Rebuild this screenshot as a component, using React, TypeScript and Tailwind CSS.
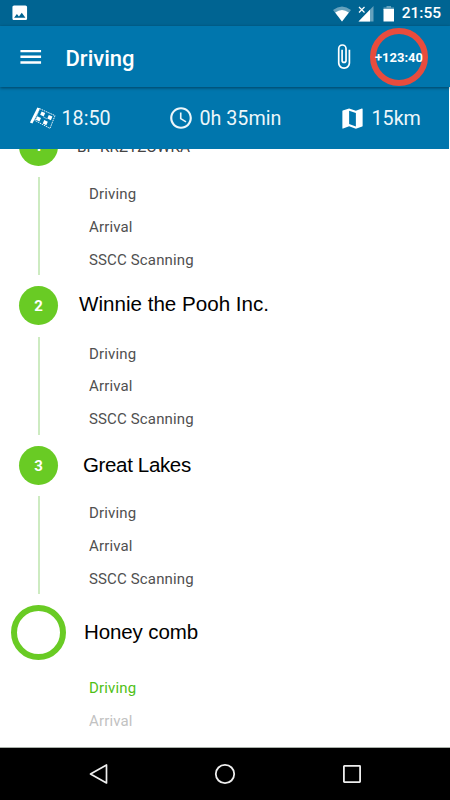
import { clsx } from 'clsx';
import { MdAttachFile, MdMap, MdMenu, MdPhoto, MdSchedule } from 'react-icons/md';

type TaskState = 'done' | 'active' | 'pending';

interface Task {
  label: string;
  state: TaskState;
}

interface Stop {
  id: number;
  name: string;
  nameClass: string;
  tasks: Task[];
}

const doneTasks: Task[] = [
  { label: 'Driving', state: 'done' },
  { label: 'Arrival', state: 'done' },
  { label: 'SSCC Scanning', state: 'done' },
];

const stops: Stop[] = [
  {
    id: 1,
    name: 'BP KRZYŻÓWKA',
    nameClass: "pl-[19px] pt-[3px] font-['Roboto',sans-serif] text-[15.3px] text-[#444]",
    tasks: doneTasks,
  },
  {
    id: 2,
    name: 'Winnie the Pooh Inc.',
    nameClass: "pl-[21px] pb-[2px] font-['Liberation_Sans',sans-serif] text-[20.6px] text-black",
    tasks: doneTasks,
  },
  {
    id: 3,
    name: 'Great Lakes',
    nameClass: "pl-[25px] pb-px font-['Liberation_Sans',sans-serif] text-[20.5px] tracking-[-0.35px] text-black",
    tasks: doneTasks,
  },
];

const current: Stop = {
  id: 4,
  name: 'Honey comb',
  nameClass: "pl-[18px] pb-px font-['Liberation_Sans',sans-serif] text-[20.5px] tracking-[-0.1px] text-black",
  tasks: [
    { label: 'Driving', state: 'active' },
    { label: 'Arrival', state: 'pending' },
  ],
};

function StatusBar() {
  return (
    <div className="flex h-[26px] shrink-0 items-center bg-[#006492] pl-[10px] pr-[9px] text-white">
      <MdPhoto size={19.5} />
      <div className="ml-auto flex items-center pt-px">
        <svg width="18" height="16" viewBox="0 0 18 16" className="mr-[7px]">
          <path d="M0 4 Q9 -3 18 4 L9 15.5 Z" fill="#fff" opacity="0.4" />
          <path d="M2.2 6.6 Q9 1.6 15.8 6.6 L9 15.5 Z" fill="#fff" />
        </svg>
        <svg width="16" height="16" viewBox="0 0 16 16" className="mr-[9px]">
          <path d="M15.5 0 V15.5 H0.5 Z" fill="#fff" opacity="0.4" />
          <path d="M12 3.7 V15.5 H0.5 Z" fill="#fff" />
          <path d="M1 1 L6.5 6.5 M6.5 1 L1 6.5" stroke="#fff" strokeWidth="1.2" />
        </svg>
        <svg width="12" height="16" viewBox="0 0 12 16" className="mr-[7px]">
          <path d="M3.5 0 H8 V1.5 H11 V4 H0.5 V1.5 H3.5 Z" fill="#fff" opacity="0.4" />
          <path d="M0.5 3 H11 V15.5 H0.5 Z" fill="#fff" />
        </svg>
        <span className="pt-px text-[15.5px] leading-none font-medium">21:55</span>
      </div>
    </div>
  );
}

function AppBar() {
  return (
    <header className="z-10 flex h-[61px] shrink-0 items-center bg-[#0076ad] pl-[17px] pr-[22px] text-white shadow-[0_1px_3px_rgba(0,0,0,0.45)]">
      <MdMenu size={27.5} />
      <h1 className="ml-[21px] pt-[4px] text-[22px] leading-none font-medium">Driving</h1>
      <MdAttachFile size={27} className="ml-auto" />
      <div className="ml-[13px] flex h-[58px] w-[58px] items-center justify-center rounded-full border-[6px] border-[#e84c3d]">
        <span className="pt-[2px] text-[13px] font-bold whitespace-nowrap">+123:40</span>
      </div>
    </header>
  );
}

function FlagIcon() {
  return (
    <svg width="27" height="23" viewBox="0 0 27 23">
      <path d="M9.6 1 L2.2 16" stroke="#fff" strokeWidth="2.8" />
      <path
        d="M10.5 1.6 L26 8.6 L21 21.4 L5.8 13.4 Z"
        fill="none"
        stroke="#fff"
        strokeWidth="0.9"
        strokeDasharray="1.6 0.8"
      />
      <g fill="#fff">
        <path d="M12.6 4.4 L16.2 6 L14.7 9.6 L11.2 7.8 Z" />
        <path d="M19.8 8 L23.4 9.6 L21.9 13.2 L18.3 11.4 Z" />
        <path d="M8.3 9.2 L12 11 L10.5 14.6 L6.8 12.8 Z" />
        <path d="M15.2 13 L18.8 14.8 L17.3 18.2 L13.8 16.4 Z" />
        <path d="M14.7 9.6 L18.3 11.4 L17.9 12.3 L14.3 10.6 Z" opacity="0.5" />
      </g>
    </svg>
  );
}

function TripSummary() {
  return (
    <div className="mr-px flex h-[62px] shrink-0 items-center bg-[#0076ad] pl-[28.5px] pt-[1px] text-[19.7px] text-[#edf6fa]">
      <div className="flex w-[139px] items-center gap-[6px]">
        <FlagIcon />
        <span className="pt-px">18:50</span>
      </div>
      <div className="flex w-[171px] items-center gap-[6px]">
        <MdSchedule size={26} />
        <span className="pt-px">0h 35min</span>
      </div>
      <div className="flex items-center gap-[6px] text-white">
        <MdMap size={27} />
        <span className="pt-px text-[#edf6fa]">15km</span>
      </div>
    </div>
  );
}

function TaskList({ tasks }: { tasks: Task[] }) {
  return (
    <ul className="text-[15px] tracking-[0.15px]">
      {tasks.map((task) => (
        <li
          key={task.label}
          className={clsx(
            'flex h-[32.8px] items-center',
            task.state === 'done' && 'text-[#505050]',
            task.state === 'active' && 'text-[#4fbf16]',
            task.state === 'pending' && 'text-[#c2c2c2]',
          )}
        >
          {task.label}
        </li>
      ))}
    </ul>
  );
}

function CompletedStop({ stop }: { stop: Stop }) {
  return (
    <li className="h-[159.6px] pl-[19px]">
      <div className="flex h-[39px] items-center">
        <span className="flex h-[39px] w-[39px] shrink-0 items-center justify-center rounded-full bg-[#69cb24] pt-px text-[15px] font-bold text-white">
          {stop.id}
        </span>
        <span className={stop.nameClass}>{stop.name}</span>
      </div>
      <div className="flex pt-[11.5px]">
        <div className="ml-[19px] h-[98px] w-[2px] bg-[#cdebc1]" />
        <div className="pt-[0.6px] pl-[49px]">
          <TaskList tasks={stop.tasks} />
        </div>
      </div>
    </li>
  );
}

function CurrentStop({ stop }: { stop: Stop }) {
  return (
    <li className="pl-[11px]">
      <div className="flex h-[55px] items-center">
        <span className="h-[55px] w-[55px] shrink-0 rounded-full border-[6px] border-[#69cb24]" />
        <span className={stop.nameClass}>{stop.name}</span>
      </div>
      <div className="pt-[11.5px] pl-[78px]">
        <TaskList tasks={stop.tasks} />
      </div>
    </li>
  );
}

function NavBar() {
  return (
    <nav className="flex h-[53px] shrink-0 items-center justify-between border-t border-[#a9b0a9] bg-black pr-[88px] pl-[88px]">
      <svg width="20" height="22" viewBox="0 0 20 22" fill="none" stroke="#eee" strokeWidth="1.7">
        <path d="M18.5 2 V20 L2.5 11 Z" strokeLinejoin="round" />
      </svg>
      <svg width="22" height="22" viewBox="0 0 22 22" fill="none" stroke="#eee" strokeWidth="1.8">
        <circle cx="11" cy="11" r="9.2" />
      </svg>
      <svg width="20" height="20" viewBox="0 0 20 20" fill="none" stroke="#eee" strokeWidth="1.8">
        <rect x="1.9" y="1.9" width="16.2" height="16.2" rx="0.5" />
      </svg>
    </nav>
  );
}

export default function App() {
  return (
    <div className="flex h-[800px] w-[450px] flex-col overflow-hidden bg-white font-['Roboto',sans-serif]">
      <StatusBar />
      <AppBar />
      <TripSummary />
      <main className="min-h-0 flex-1 overflow-hidden">
        <ul className="-mt-[22.3px]">
          {stops.map((stop) => (
            <CompletedStop key={stop.id} stop={stop} />
          ))}
          <CurrentStop stop={current} />
        </ul>
      </main>
      <NavBar />
    </div>
  );
}
